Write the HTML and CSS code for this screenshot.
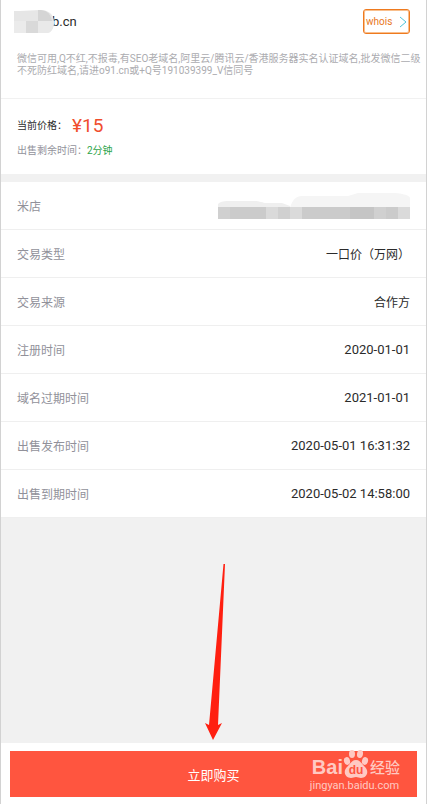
FILE: index.html
```html
<!DOCTYPE html>
<html lang="zh-CN">
<head>
  <meta charset="UTF-8" />
  <meta name="viewport" content="width=device-width, initial-scale=1.0" />
  <title>域名详情</title>
  <link rel="stylesheet" href="styles.css">
</head>
<body>
  <div class="page">
    <header class="domain">
      <div class="domain-top">
        <h1 class="domain-name">
          <svg class="name-mask" width="40" height="24" viewBox="0 0 40 24" aria-hidden="true">
            <path d="M0 1h6l20-1c8 0 14 4 14 12s-4 11-7 11H0z" fill="#e6e6e6"/>
            <path d="M24 0c8 0 12 2 14 11H24z" fill="#d5d5d5"/>
            <path d="M0 11h12v12H0z" fill="#ebebeb"/>
            <path d="M12 11h12v12H12z" fill="#d9d9d9"/>
            <path d="M24 11h16c0 8-4 12-7 12h-9z" fill="#e9e9e9"/>
          </svg><span>b.cn</span>
        </h1>
        <a class="whois" href="#">whois
          <svg width="8" height="12" viewBox="0 0 8 12" aria-hidden="true">
            <path d="M1 1l6 5-6 5" fill="none" stroke="#4fc3d9" stroke-width="1"/>
          </svg>
        </a>
      </div>
      <p class="domain-desc">微信可用,Q不红,不报毒,有SEO老域名,阿里云/腾讯云/香港服务器实名认证域名,批发微信二级<br>不死防红域名,请进o91.cn或+Q号191039399_V信同号</p>
    </header>

    <section class="price">
      <p class="price-row">当前价格：<strong>¥15</strong></p>
      <p class="time-row">出售剩余时间：<span>2分钟</span></p>
    </section>

    <dl class="info">
      <div class="info-row">
        <dt>米店</dt>
        <dd>
          <svg class="shop-mask" width="192" height="28" viewBox="0 0 192 28" aria-hidden="true">
            <path d="M0 16V12c3-3 7-3 12-3h24c6 0 9 2 12 2h16l8 3v2z" fill="#efefef"/>
            <path d="M72 16c2-8 6-12 12-12h46l10-3h34c8 0 18 2 18 5v10z" fill="#f5f5f5"/>
            <path d="M0 15h192v12H0z" fill="#d0d0d0"/>
            <path d="M12 15h36v12H12zM84 15h48v12H84zM168 15h12v12h-12z" fill="#cbcbcb"/>
            <path d="M48 15h12v12H48zM72 15h12v12H72zM180 15h12v12h-12z" fill="#dadada"/>
            <path d="M132 15h24v12h-24z" fill="#c5c5c5"/>
          </svg>
        </dd>
      </div>
      <div class="info-row">
        <dt>交易类型</dt>
        <dd>一口价（万网）</dd>
      </div>
      <div class="info-row">
        <dt>交易来源</dt>
        <dd>合作方</dd>
      </div>
      <div class="info-row">
        <dt>注册时间</dt>
        <dd class="date">2020-01-01</dd>
      </div>
      <div class="info-row">
        <dt>域名过期时间</dt>
        <dd class="date">2021-01-01</dd>
      </div>
      <div class="info-row">
        <dt>出售发布时间</dt>
        <dd class="date">2020-05-01 16:31:32</dd>
      </div>
      <div class="info-row">
        <dt>出售到期时间</dt>
        <dd class="date">2020-05-02 14:58:00</dd>
      </div>
    </dl>

    <div class="spacer">
      <svg class="arrow" width="18" height="178" viewBox="0 0 18 178" aria-hidden="true">
        <path d="M18.500 1h1.500L13 162l4-2-9 17-8-17 4 2z" fill="#ff1f10"/>
      </svg>
    </div>

    <footer class="buy-bar">
      <button class="buy-btn" type="button">立即购买</button>
      <div class="watermark">
        <div class="wm-logo">
          <span>Bai</span>
          <svg width="26" height="30" viewBox="0 0 26 30" aria-hidden="true">
            <g fill="#ffc9c2">
              <ellipse cx="4" cy="12" rx="3" ry="4" transform="rotate(-15 4 12)"/>
              <ellipse cx="9" cy="5" rx="3" ry="4"/>
              <ellipse cx="17" cy="5" rx="3" ry="4" transform="rotate(10 17 5)"/>
              <ellipse cx="22" cy="12" rx="3" ry="4" transform="rotate(15 22 12)"/>
              <path d="M13 11c4 0 5 3 8 6 6 5 3 12-3 12-2 0-3-1-5-1s-3 1-5 1c-6 0-9-7-3-12 3-3 4-6 8-6z"/>
            </g>
            <text x="13" y="25" text-anchor="middle" class="wm-du">du</text>
          </svg>
          <span class="wm-cn">经验</span>
        </div>
        <div class="wm-url">jingyan.baidu.com</div>
      </div>
    </footer>
  </div>
</body>
</html>
```

FILE: styles.css
```css
* {
  box-sizing: border-box;
}
body {
  margin: 0;
  font-family: Roboto, "Noto Sans CJK SC", sans-serif;
  font-size: 12px;
  color: #2b2b2b;
  background: #f1f1f1;
}
h1, p, dl, dd {
  margin: 0;
}
.page {
  display: flex;
  flex-direction: column;
  min-height: 100vh;
  border-left: 1px solid #d2d2d2;
  border-right: 1px solid #d2d2d2;
}
.domain {
  padding: 9px 16px 21px 13px;
  background: #fff;
  border-bottom: 1px solid #f1f1f1;
}
.domain-top {
  display: flex;
  justify-content: space-between;
  align-items: center;
}
.domain-name {
  display: flex;
  align-items: center;
  font-size: 13px;
  font-weight: 400;
}
.name-mask {
  position: relative;
  margin-right: -2px;
}
.whois {
  display: flex;
  justify-content: space-between;
  align-items: center;
  width: 47px;
  height: 25px;
  padding: 0 2px;
  border: 1px solid #ee7a1f;
  border-radius: 3px;
  box-shadow: inset 0 0 0 1px #f9bf8d;
  font-size: 10px;
  color: #e87722;
  text-decoration: none;
}
.domain-desc {
  margin-top: 19px;
  padding-left: 3px;
  font-size: 10px;
  line-height: 12px;
  color: #acacb0;
  white-space: nowrap;
}
.price {
  padding: 16px 16px 15px;
  background: #fff;
}
.price-row {
  display: flex;
  align-items: center;
  font-size: 10px;
  line-height: 22px;
}
.price-row strong {
  margin-left: 5px;
  font-size: 19px;
  font-weight: 400;
  color: #f04d2d;
}
.time-row {
  margin-top: 6px;
  font-size: 10px;
  line-height: 16px;
  color: #93939c;
}
.time-row span {
  color: #2ea44a;
}
.info {
  margin-top: 8px;
  background: #fff;
}
.info-row {
  display: flex;
  justify-content: space-between;
  align-items: center;
  height: 48px;
  padding: 0 16px;
  border-bottom: 1px solid #efefef;
}
.info-row dt {
  color: #91919a;
}
.info-row .date {
  font-size: 13px;
}
.shop-mask {
  display: block;
}
.spacer {
  position: relative;
  flex: 1;
  min-height: 225px;
}
/* hand-drawn pointer to the buy button */
.arrow {
  position: absolute;
  left: 48%;
  bottom: 2px;
  overflow: visible;
}
.buy-bar {
  position: relative;
  padding: 8px 9px 7px;
  background: #fff;
}
.buy-btn {
  display: block;
  width: 100%;
  height: 46px;
  border: 0;
  background: #ff553f;
  font-family: inherit;
  font-size: 13px;
  color: #fff;
}
.watermark {
  position: absolute;
  right: 26px;
  bottom: 11px;
  color: #ffc9c2;
  font-family: "Liberation Sans", sans-serif;
}
.wm-logo {
  display: flex;
  align-items: flex-end;
  height: 30px;
  padding-left: 2px;
  font-size: 20px;
  font-weight: 700;
  line-height: 24px;
}
.wm-cn {
  margin-left: 1px;
  font-family: "Noto Sans CJK SC", sans-serif;
  font-size: 15px;
  font-weight: 500;
}
.wm-du {
  font-size: 12px;
  fill: #ff553f;
}
.wm-url {
  font-family: Roboto, sans-serif;
  font-size: 11px;
  line-height: 14px;
}
```
